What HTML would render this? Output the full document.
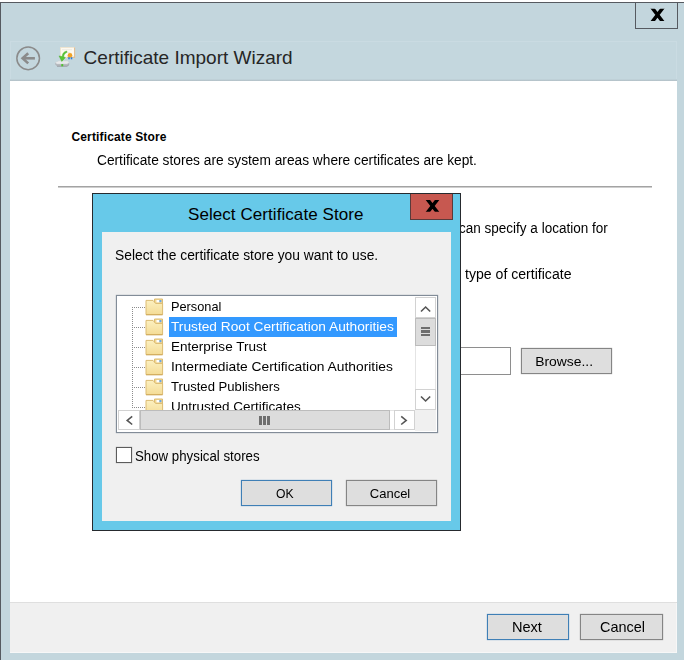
<!DOCTYPE html>
<html>
<head>
<meta charset="utf-8">
<title>Certificate Import Wizard</title>
<style>
html,body{margin:0;padding:0;}
body{width:684px;height:660px;overflow:hidden;background:#fff;font-family:"Liberation Sans",sans-serif;font-size:13px;color:#000;position:relative;}
.abs{position:absolute;}
#win{left:0;top:2px;width:684px;height:658px;background:#c3d6dd;}
#wtop{left:0;top:2px;width:684px;height:1px;background:#565a60;}
#wleft{left:0;top:2px;width:1px;height:658px;background:#565a60;}
#closeb{left:635px;top:2px;width:41px;height:25px;border:1px solid #565a60;box-sizing:content-box;}
#band{left:10px;top:41px;width:667px;height:41px;background:#c4d7de;box-sizing:border-box;border-top:1px solid #cadbe2;border-left:1px solid #cadbe2;border-right:1px solid #cadbe2;}
#bandline{left:10px;top:78.5px;width:667px;height:3px;background:linear-gradient(#c3d6dd,#b4c2c9 55%,#b6c3ca);}
#client{left:10px;top:81.3px;width:667px;height:571.7px;background:#fff;}
#footer{left:10px;top:603px;width:667px;height:50px;background:#f0f0f0;box-sizing:border-box;border-right:1px solid #f7f7f7;border-bottom:1px solid #f7f7f7;}
#footline{left:10px;top:602px;width:667px;height:1px;background:#dfdfdf;}
#title{left:83.6px;top:46px;font-size:19px;line-height:24px;white-space:nowrap;color:#262626;}
#h1{left:71.5px;top:129.9px;font-weight:bold;font-size:12px;line-height:14px;white-space:nowrap;letter-spacing:0.137px;}
#h2{left:97px;top:151.75px;font-size:14px;line-height:16px;white-space:nowrap;}
#sep{left:57.7px;top:186px;width:594.3px;height:2px;background:linear-gradient(#a3a3a3 0,#a3a3a3 50%,#cecece 50%,#cecece 100%);}
.t{white-space:nowrap;font-size:14px;line-height:16px;}
.btn{box-sizing:border-box;border:1px solid #858585;background:#dedede;box-shadow:0 0 1px rgba(90,90,90,.55);text-align:center;white-space:nowrap;}
.btn.def{border-color:#3f7fb6;box-shadow:0 0 1px rgba(63,127,182,.7);}
#tb{left:440px;top:346.5px;width:70.5px;height:28.5px;box-sizing:border-box;border:1px solid #8e8e8e;background:#fff;}
/* dialog */
#dlg{left:92px;top:193px;width:369px;height:337.7px;box-sizing:border-box;border:1px solid #262a2e;background:#67c9e9;}
#dcl{left:101.7px;top:231.6px;width:349.4px;height:289.6px;background:#f0f0f0;}
#dtitle{left:188px;top:203.5px;font-size:17px;line-height:22px;white-space:nowrap;letter-spacing:0.067px;}
#dclose{left:410px;top:194px;width:43px;height:26px;box-sizing:border-box;background:#c75850;border:1px solid #5a3a3a;border-top:none;}
#lb{left:116px;top:295px;width:322px;height:138px;box-sizing:border-box;border:1px solid #828c98;background:#fff;overflow:hidden;box-shadow:0 0 1px #8a96a2;}
#tree{left:1px;top:1px;width:298px;height:114px;overflow:hidden;position:absolute;}
.row{position:absolute;left:51px;height:20px;line-height:20.2px;font-size:13.5px;white-space:nowrap;padding:0 3px 0 2px;}
.sel{background:#3399ff;color:#fff;}
.fold{position:absolute;left:27.3px;width:19px;height:18px;}
.hd{position:absolute;left:14px;width:14px;height:1px;background-image:linear-gradient(90deg,#8c8c8c 50%,transparent 50%);background-size:2px 1px;}
#vd{position:absolute;left:14px;top:10px;width:1px;height:101px;background-image:linear-gradient(#8c8c8c 50%,transparent 50%);background-size:1px 2px;}
.sbtn{position:absolute;box-sizing:border-box;background:#fff;border:1px solid #d2d2d2;}
.thumb{position:absolute;box-sizing:border-box;background:#dcdcdc;border:1px solid #bcbcbc;}
#cb{left:115.8px;top:447.2px;width:16.2px;height:16px;box-sizing:border-box;border:1px solid #5c5c5c;box-shadow:0 0 1px rgba(60,60,60,.5);background:#fff;}
</style>
</head>
<body>
<div class="abs" id="win"></div>
<div class="abs" id="wtop"></div>
<div class="abs" id="wleft"></div>
<div class="abs" id="closeb">
 <svg width="41" height="26" viewBox="0 0 41 26" style="position:absolute;left:0;top:0"><defs><clipPath id="c1"><rect x="10" y="5.8" width="24" height="12.1"/></clipPath></defs><path clip-path="url(#c1)" d="M14.6 2.8 L28.4 20.9 M28.4 2.8 L14.6 20.9" stroke="#000" stroke-width="3.5" fill="none"/></svg>
</div>
<div class="abs" id="band"></div>
<div class="abs" id="bandline"></div>
<div class="abs" id="client"></div>
<div class="abs" id="footline"></div>
<div class="abs" id="footer"></div>

<!-- back button -->
<svg class="abs" style="left:14px;top:44px" width="28" height="28" viewBox="0 0 28 28">
 <circle cx="14.15" cy="14.35" r="11.3" fill="none" stroke="#8b8b8b" stroke-width="1.5"/>
 <path d="M20.9 14.3 H9" stroke="#8b8b8b" stroke-width="2.6" fill="none"/>
 <path d="M14.2 9.2 L8.6 14.3 L14.2 19.4" stroke="#8b8b8b" stroke-width="2.6" fill="none" stroke-linejoin="miter"/>
</svg>

<!-- wizard icon -->
<svg class="abs" style="left:52px;top:44px" width="26" height="26" viewBox="0 0 26 26">
 <defs><filter id="bl" x="-20%" y="-20%" width="140%" height="140%"><feGaussianBlur stdDeviation="0.5"/></filter></defs>
 <g filter="url(#bl)">
  <rect x="8.6" y="3.6" width="13.8" height="9.6" fill="#fdfaf2" stroke="#f1e4cd" stroke-width="0.9"/>
  <path d="M22.6 3.4 V13.4 H15" stroke="#dfbf97" stroke-width="1.1" fill="none"/>
  <rect x="10" y="5.3" width="10" height="0.9" fill="#ece8e0"/>
  <rect x="12.5" y="8" width="6" height="0.9" fill="#ece8e0"/>
  <path d="M3.2 18.6 L5 20 H15 L17.2 18.6 V20.6 L15 22.2 H5 L3.2 20.6 Z" fill="#b3b7bc"/>
  <path d="M3.2 18.6 L7 16.8 H15.4 L17.2 18.6 L15 20.1 H5 Z" fill="#e7e9eb" stroke="#c6c9cc" stroke-width="0.4"/>
  <path d="M5 22.3 H15 L17.1 20.7" stroke="#84888d" stroke-width="0.6" fill="none"/>
  <rect x="9.3" y="20.1" width="1.9" height="2.2" fill="#4cc22c"/>
  <path d="M14.8 7 C11.6 7.6 10.2 9.8 10.2 12.6 L7 11.9 L9.8 17.4 L13.4 13.5 L11.7 13.1 C11.8 11 12.6 9.4 15 8.3 Z" fill="#58c736" stroke="#43aa25" stroke-width="0.4"/>
  <circle cx="18" cy="11.2" r="2.3" fill="#f0a226"/>
  <rect x="16.2" y="13.2" width="1.6" height="2.1" fill="#2f7fd6"/>
  <rect x="18.7" y="13.2" width="1.6" height="2.1" fill="#2f7fd6"/>
 </g>
</svg>

<div class="abs" id="title">Certificate Import Wizard</div>
<div class="abs" id="h1">Certificate Store</div>
<div class="abs" id="h2"><span style="display:inline-block;transform-origin:0 50%;transform:scaleX(0.9804)">Certificate stores are system areas where certificates are kept.</span></div>
<div class="abs" id="sep"></div>
<div class="abs t" id="bg1" style="left:459.45px;top:219.65px;"><span style="display:inline-block;transform-origin:0 50%;transform:scaleX(0.9654)">can specify a location for</span></div>
<div class="abs t" id="bg2" style="left:464.6px;top:266.45px;"><span style="display:inline-block;transform-origin:0 50%;transform:scaleX(1.0063)">type of certificate</span></div>
<div class="abs" id="tb"></div>
<div class="abs btn" id="browse" style="left:520.5px;top:347.5px;width:91.5px;height:26.5px;line-height:25px;font-size:13.5px;padding-right:3.4px;"><span style="display:inline-block;transform-origin:50% 50%;transform:scaleX(1.0288)">Browse...</span></div>
<div class="abs btn def" id="next" style="left:486.8px;top:614.2px;width:82.6px;height:26.3px;line-height:24.3px;font-size:14.5px;padding-right:2px;"><span style="display:inline-block;transform-origin:50% 50%;transform:scaleX(1.0058)">Next</span></div>
<div class="abs btn" id="cancel" style="left:580.3px;top:614.2px;width:82.8px;height:26.3px;line-height:24.3px;font-size:14.5px;padding-left:1.6px;"><span style="display:inline-block;transform-origin:50% 50%;transform:scaleX(0.9969)">Cancel</span></div>

<div class="abs" id="dlg"></div>
<div class="abs" id="dcl"></div>
<div class="abs" id="dtitle">Select Certificate Store</div>
<div class="abs" id="dclose">
 <svg width="41" height="25" viewBox="0 0 41 25" style="position:absolute;left:0;top:0"><defs><clipPath id="c2"><rect x="8" y="6.1" width="26" height="11.7"/></clipPath></defs><path clip-path="url(#c2)" d="M14.75 3.2 L28.25 20.7 M28.25 3.2 L14.75 20.7" stroke="#000" stroke-width="3.5" fill="none"/></svg>
</div>
<div class="abs t" id="dmsg" style="left:115px;top:246.55px;"><span style="display:inline-block;transform-origin:0 50%;transform:scaleX(0.9861)">Select the certificate store you want to use.</span></div>
<div class="abs" id="lb">
 <div id="tree">
  <div id="vd"></div>
  <div class="hd" style="top:10px"></div>
  <div class="hd" style="top:30px"></div>
  <div class="hd" style="top:50px"></div>
  <div class="hd" style="top:70px"></div>
  <div class="hd" style="top:90px"></div>
  <div class="hd" style="top:110px"></div>
  <svg width="0" height="0" style="position:absolute"><defs>
   <linearGradient id="fg" x1="0" y1="0" x2="0" y2="1"><stop offset="0" stop-color="#fcf0c0"/><stop offset="1" stop-color="#f4dc96"/></linearGradient></defs></svg>
  <svg class="fold" style="top:0.9px" viewBox="0 0 19 18"><path d="M9.5 1 H17.5 V6 H9.5 Z" fill="#f3d995" stroke="#dcbb72" stroke-width="1"/><rect x="11.5" y="2" width="3" height="2.4" fill="#ffffff"/><rect x="14.4" y="2" width="2" height="2.2" fill="#6aa6e2"/><path d="M1 2.4 H8 L10.6 5.4 H17.6 V16.6 H1 Z" fill="url(#fg)" stroke="#dcbb72" stroke-width="1" stroke-linejoin="round"/><path d="M1 16.8 H17.6" stroke="#caa24e" stroke-width="0.8"/></svg>
  <svg class="fold" style="top:20.9px" viewBox="0 0 19 18"><path d="M9.5 1 H17.5 V6 H9.5 Z" fill="#f3d995" stroke="#dcbb72" stroke-width="1"/><rect x="11.5" y="2" width="3" height="2.4" fill="#ffffff"/><rect x="14.4" y="2" width="2" height="2.2" fill="#6aa6e2"/><path d="M1 2.4 H8 L10.6 5.4 H17.6 V16.6 H1 Z" fill="url(#fg)" stroke="#dcbb72" stroke-width="1" stroke-linejoin="round"/><path d="M1 16.8 H17.6" stroke="#caa24e" stroke-width="0.8"/></svg>
  <svg class="fold" style="top:40.9px" viewBox="0 0 19 18"><path d="M9.5 1 H17.5 V6 H9.5 Z" fill="#f3d995" stroke="#dcbb72" stroke-width="1"/><rect x="11.5" y="2" width="3" height="2.4" fill="#ffffff"/><rect x="14.4" y="2" width="2" height="2.2" fill="#6aa6e2"/><path d="M1 2.4 H8 L10.6 5.4 H17.6 V16.6 H1 Z" fill="url(#fg)" stroke="#dcbb72" stroke-width="1" stroke-linejoin="round"/><path d="M1 16.8 H17.6" stroke="#caa24e" stroke-width="0.8"/></svg>
  <svg class="fold" style="top:60.9px" viewBox="0 0 19 18"><path d="M9.5 1 H17.5 V6 H9.5 Z" fill="#f3d995" stroke="#dcbb72" stroke-width="1"/><rect x="11.5" y="2" width="3" height="2.4" fill="#ffffff"/><rect x="14.4" y="2" width="2" height="2.2" fill="#6aa6e2"/><path d="M1 2.4 H8 L10.6 5.4 H17.6 V16.6 H1 Z" fill="url(#fg)" stroke="#dcbb72" stroke-width="1" stroke-linejoin="round"/><path d="M1 16.8 H17.6" stroke="#caa24e" stroke-width="0.8"/></svg>
  <svg class="fold" style="top:80.9px" viewBox="0 0 19 18"><path d="M9.5 1 H17.5 V6 H9.5 Z" fill="#f3d995" stroke="#dcbb72" stroke-width="1"/><rect x="11.5" y="2" width="3" height="2.4" fill="#ffffff"/><rect x="14.4" y="2" width="2" height="2.2" fill="#6aa6e2"/><path d="M1 2.4 H8 L10.6 5.4 H17.6 V16.6 H1 Z" fill="url(#fg)" stroke="#dcbb72" stroke-width="1" stroke-linejoin="round"/><path d="M1 16.8 H17.6" stroke="#caa24e" stroke-width="0.8"/></svg>
  <svg class="fold" style="top:100.9px" viewBox="0 0 19 18"><path d="M9.5 1 H17.5 V6 H9.5 Z" fill="#f3d995" stroke="#dcbb72" stroke-width="1"/><rect x="11.5" y="2" width="3" height="2.4" fill="#ffffff"/><rect x="14.4" y="2" width="2" height="2.2" fill="#6aa6e2"/><path d="M1 2.4 H8 L10.6 5.4 H17.6 V16.6 H1 Z" fill="url(#fg)" stroke="#dcbb72" stroke-width="1" stroke-linejoin="round"/><path d="M1 16.8 H17.6" stroke="#caa24e" stroke-width="0.8"/></svg>
  <div class="row" style="top:0px;"><span style="display:inline-block;transform-origin:0 50%;transform:scaleX(0.9456)">Personal</span></div>
  <div class="row sel" style="top:20px;width:223.3px;"><span style="display:inline-block;transform-origin:0 50%;transform:scaleX(1.0157)">Trusted Root Certification Authorities</span></div>
  <div class="row" style="top:40px;"><span style="display:inline-block;transform-origin:0 50%;transform:scaleX(1.0021)">Enterprise Trust</span></div>
  <div class="row" style="top:60px;"><span style="display:inline-block;transform-origin:0 50%;transform:scaleX(1.0228)">Intermediate Certification Authorities</span></div>
  <div class="row" style="top:80px;"><span style="display:inline-block;transform-origin:0 50%;transform:scaleX(0.9709)">Trusted Publishers</span></div>
  <div class="row" style="top:100px;"><span style="display:inline-block;transform-origin:0 50%;transform:scaleX(0.9999)">Untrusted Certificates</span></div>
 </div>
 <!-- vertical scrollbar : list inner origin = (117,296) -->
 <div class="sbtn" style="left:298px;top:1px;width:21px;height:21px;">
  <svg width="19" height="19" viewBox="0 0 19 19" style="position:absolute;left:0;top:0"><path d="M5 13.5 L9.6 9 L14.2 13.5" stroke="#555" stroke-width="1.6" fill="none"/></svg>
 </div>
 <div class="abs" style="left:298px;top:22px;width:21px;height:71px;box-sizing:border-box;border-left:1px solid #e4e4e4;border-right:1px solid #e4e4e4;"></div>
 <div class="thumb" style="left:298px;top:22px;width:21px;height:28px;">
  <div class="abs" style="left:5px;top:7.8px;width:8.8px;height:2.3px;background:#6e6e6e"></div>
  <div class="abs" style="left:5px;top:11.3px;width:8.8px;height:2.3px;background:#6e6e6e"></div>
  <div class="abs" style="left:5px;top:14.8px;width:8.8px;height:2.3px;background:#6e6e6e"></div>
 </div>
 <div class="sbtn" style="left:298px;top:93px;width:21px;height:21px;">
  <svg width="19" height="19" viewBox="0 0 19 19" style="position:absolute;left:0;top:0"><path d="M5 6.5 L9.6 11 L14.2 6.5" stroke="#555" stroke-width="1.6" fill="none"/></svg>
 </div>
 <!-- horizontal scrollbar -->
 <div class="sbtn" style="left:1px;top:114px;width:22px;height:20px;">
  <svg width="20" height="19" viewBox="0 0 20 19" style="position:absolute;left:0;top:0"><path d="M13.2 5.3 L8.2 9.4 L13.2 13.5" stroke="#555" stroke-width="1.6" fill="none"/></svg>
 </div>
 <div class="thumb" style="left:22.5px;top:114px;width:250.5px;height:20px;">
  <div class="abs" style="left:118.8px;top:5px;width:2.4px;height:9px;background:#6e6e6e"></div>
  <div class="abs" style="left:122.8px;top:5px;width:2.4px;height:9px;background:#6e6e6e"></div>
  <div class="abs" style="left:126.8px;top:5px;width:2.4px;height:9px;background:#6e6e6e"></div>
 </div>
 <div class="abs" style="left:273px;top:114px;width:5px;height:20px;box-sizing:border-box;border-top:1px solid #e4e4e4;border-bottom:1px solid #e4e4e4;"></div>
 <div class="sbtn" style="left:277px;top:114px;width:21px;height:20px;">
  <svg width="19" height="19" viewBox="0 0 19 19" style="position:absolute;left:0;top:0"><path d="M6.2 5.3 L11.2 9.4 L6.2 13.5" stroke="#555" stroke-width="1.6" fill="none"/></svg>
 </div>
 <div class="abs" style="left:298px;top:114px;width:21px;height:20.6px;background:#f0f0f0"></div>
</div>
<div class="abs" id="cb"></div>
<div class="abs t" id="chk" style="left:135.3px;top:448.05px;"><span style="display:inline-block;transform-origin:0 50%;transform:scaleX(0.9474)">Show physical stores</span></div>
<div class="abs btn def" id="ok" style="left:240.8px;top:479.7px;width:91.5px;height:26.3px;line-height:26.4px;font-size:13.5px;padding-right:2.6px;"><span style="display:inline-block;transform-origin:50% 50%;transform:scaleX(0.9018)">OK</span></div>
<div class="abs btn" id="dcancel" style="left:345.8px;top:479.7px;width:91.5px;height:26.3px;line-height:26.4px;font-size:13.5px;padding-right:2.1px;"><span style="display:inline-block;transform-origin:50% 50%;transform:scaleX(0.9636)">Cancel</span></div>
</body>
</html>
